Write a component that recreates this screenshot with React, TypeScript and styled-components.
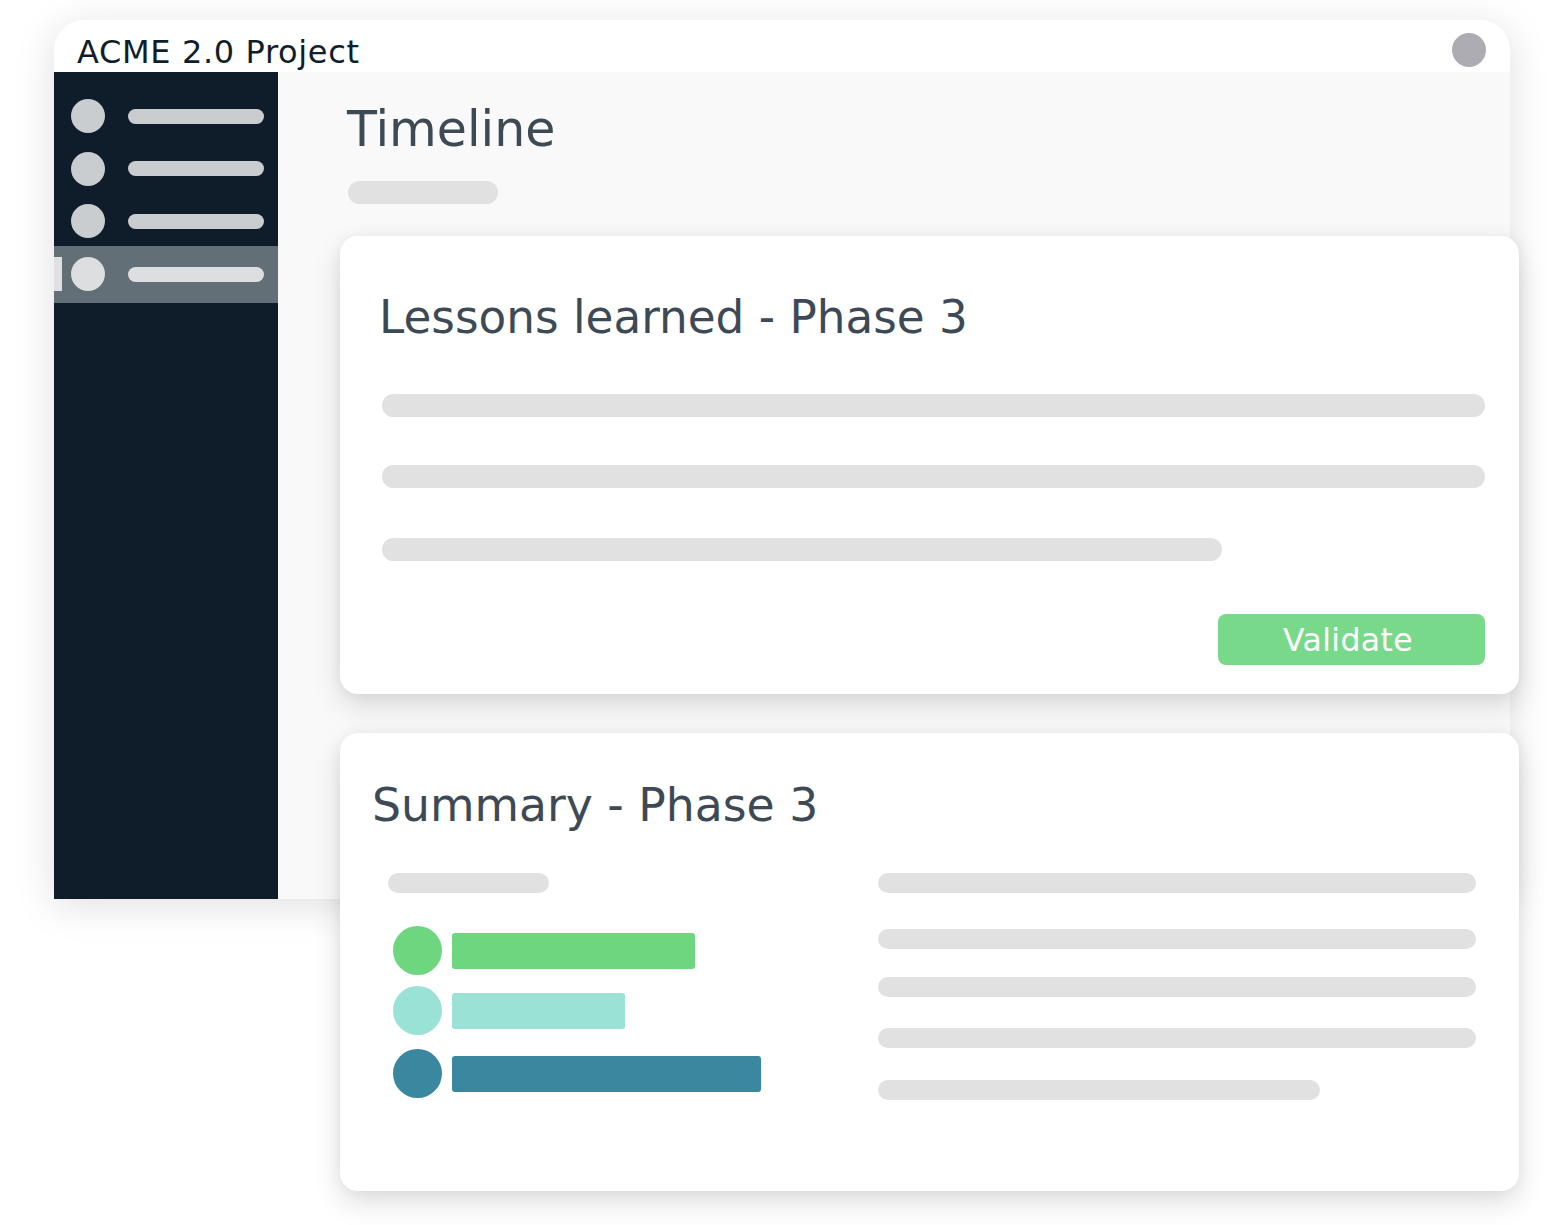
import React, { FC } from 'react';
import styled, { createGlobalStyle } from 'styled-components';

const GlobalStyle = createGlobalStyle`
html, body {
    margin: 0;
    padding: 0;
    background: #ffffff;
    font-family: "DejaVu Sans", Verdana, sans-serif;
}
`;

const Stage = styled.div`
position: relative;
width: 1560px;
height: 1225px;
padding: 20px 0 0 54px;
box-sizing: border-box;
overflow: hidden;
`;

const Window = styled.div`
width: 1456px;
height: 879px;
display: flex;
flex-direction: column;
background: #ffffff;
border-radius: 30px 30px 0 0;
box-shadow: 0 6px 40px rgba(0, 0, 0, 0.13);
overflow: hidden;
`;

const TitleBar = styled.div`
height: 52px;
flex-shrink: 0;
display: flex;
align-items: center;
justify-content: space-between;
padding: 2px 24px 0 23px;
box-sizing: border-box;
`;

const Title = styled.span`
font-size: 32px;
color: #101e2a;
letter-spacing: 0.65px;
padding-top: 9px;
`;

const Dot = styled.span`
width: 34px;
height: 34px;
border-radius: 50%;
background: #adacb2;
margin-top: 6px;
`;

const Body = styled.div`
flex: 1;
display: flex;
`;

const Sidebar = styled.nav`
width: 224px;
background: #0f1d2a;
display: flex;
flex-direction: column;
padding-top: 18px;
`;

const NavItem = styled.div<{ $active?: boolean }>`
position: relative;
height: ${p => (p.$active ? '57px' : '52.5px')};
display: flex;
align-items: center;
gap: 23px;
padding-left: 17px;
box-sizing: border-box;
background: ${p => (p.$active ? '#636f77' : 'transparent')};
${p => p.$active && 'margin-top: -2px;'}

& > i {
    width: 34px;
    height: 34px;
    border-radius: 50%;
    background: ${p => (p.$active ? '#dcdee0' : '#c9cdd0')};
}

& > b {
    width: 136px;
    height: 15px;
    border-radius: 8px;
    background: ${p => (p.$active ? '#dcdee0' : '#c9cdd0')};
}
`;

const Marker = styled.span`
position: absolute;
left: 0;
top: 11px;
width: 8px;
height: 34px;
background: #dfe0e2;
`;

const Main = styled.main`
flex: 1;
background: #f9f9f9;
padding: 26px 0 0 69px;
`;

const PageTitle = styled.h1`
margin: 0;
font-size: 49px;
font-weight: 400;
color: #3d4a55;
line-height: 64px;
`;

const Pill = styled.div<{ $w: number; $h?: number }>`
width: ${p => p.$w}px;
height: ${p => p.$h ?? 23}px;
border-radius: 12px;
background: #e1e1e1;
`;

const TitlePill = styled(Pill)`
margin: 19px 0 0 1px;
`;

const Cards = styled.div`
position: absolute;
left: 340px;
top: 236px;
width: 1179px;
display: flex;
flex-direction: column;
gap: 39px;
`;

const Card = styled.section`
height: 458px;
background: #ffffff;
border-radius: 18px;
box-shadow: 0 12px 28px rgba(0, 0, 0, 0.13), 0 0 14px rgba(0, 0, 0, 0.05);
box-sizing: border-box;
display: flex;
flex-direction: column;
`;

const LessonsCard = styled(Card)`
padding: 54px 34px 0 39px;
`;

const SummaryCard = styled(Card)`
padding: 45px 42px 0 32px;
`;

const CardTitle = styled.h2<{ $size?: number }>`
margin: 0;
font-size: ${p => p.$size ?? 46}px;
font-weight: 400;
color: #3d4a55;
line-height: 56px;
`;

const Lines = styled.div`
display: flex;
flex-direction: column;
gap: 48px;
margin: 48px 0 0 3px;
& > div:nth-child(3) { margin-top: 2px; }
`;

const Footer = styled.div`
display: flex;
justify-content: flex-end;
margin-top: 53px;
`;

const Button = styled.button`
width: 267px;
height: 51px;
border: none;
border-radius: 8px;
background: #79d98a;
color: #ffffff;
font-family: inherit;
font-size: 31.5px;
letter-spacing: 0.4px;
padding: 0 7px 0 0;
`;

const SummaryBody = styled.div`
display: flex;
margin-top: 39px;
`;

const Legend = styled.div`
width: 490px;
padding-left: 16px;
display: flex;
flex-direction: column;
`;

const LegendRows = styled.div`
display: flex;
flex-direction: column;
gap: 11px;
margin-top: 33px;
& > div:nth-child(3) { margin-top: 3px; }
`;

const LegendRow = styled.div`
display: flex;
align-items: center;
gap: 10px;
padding-left: 5px;
`;

const Swatch = styled.span<{ $color: string }>`
width: 49px;
height: 49px;
border-radius: 50%;
background: ${p => p.$color};
`;

const Bar = styled.span<{ $color: string }>`
height: 36px;
border-radius: 3px;
background: ${p => p.$color};
`;

const TextLines = styled.div`
flex: 1;
display: flex;
flex-direction: column;
gap: 28px;
padding-right: 1px;
& > div:nth-child(1) { margin-bottom: 8px; }
& > div:nth-child(4) { margin-top: 3px; }
& > div:nth-child(5) { margin-top: 4px; }
`;

const legend = [
    { color: '#6ed67f', width: 243 },
    { color: '#9ae2d5', width: 173 },
    { color: '#3a87a0', width: 309 },
];

const navItems = [false, false, false, true];

const App: FC = () => {
    return (
        <>
            <GlobalStyle />
            <Stage>
                <Window>
                    <TitleBar>
                        <Title>ACME 2.0 Project</Title>
                        <Dot />
                    </TitleBar>
                    <Body>
                        <Sidebar>
                            {navItems.map((active, i) => (
                                <NavItem key={i} $active={active}>
                                    {active && <Marker />}
                                    <i />
                                    <b />
                                </NavItem>
                            ))}
                        </Sidebar>
                        <Main>
                            <PageTitle>Timeline</PageTitle>
                            <TitlePill $w={150} />
                        </Main>
                    </Body>
                </Window>

                <Cards>
                    <LessonsCard>
                        <CardTitle $size={45.3}>Lessons learned - Phase 3</CardTitle>
                        <Lines>
                            <Pill $w={1103} />
                            <Pill $w={1103} />
                            <Pill $w={840} />
                        </Lines>
                        <Footer>
                            <Button>Validate</Button>
                        </Footer>
                    </LessonsCard>

                    <SummaryCard>
                        <CardTitle $size={45.7}>Summary - Phase 3</CardTitle>
                        <SummaryBody>
                            <Legend>
                                <Pill $w={161} $h={20} />
                                <LegendRows>
                                    {legend.map(l => (
                                        <LegendRow key={l.color}>
                                            <Swatch $color={l.color} />
                                            <Bar $color={l.color} style={{ width: l.width }} />
                                        </LegendRow>
                                    ))}
                                </LegendRows>
                            </Legend>
                            <TextLines>
                                <Pill $w={598} $h={20} />
                                <Pill $w={598} $h={20} />
                                <Pill $w={598} $h={20} />
                                <Pill $w={598} $h={20} />
                                <Pill $w={442} $h={20} />
                            </TextLines>
                        </SummaryBody>
                    </SummaryCard>
                </Cards>
            </Stage>
        </>
    );
};

export default App;
